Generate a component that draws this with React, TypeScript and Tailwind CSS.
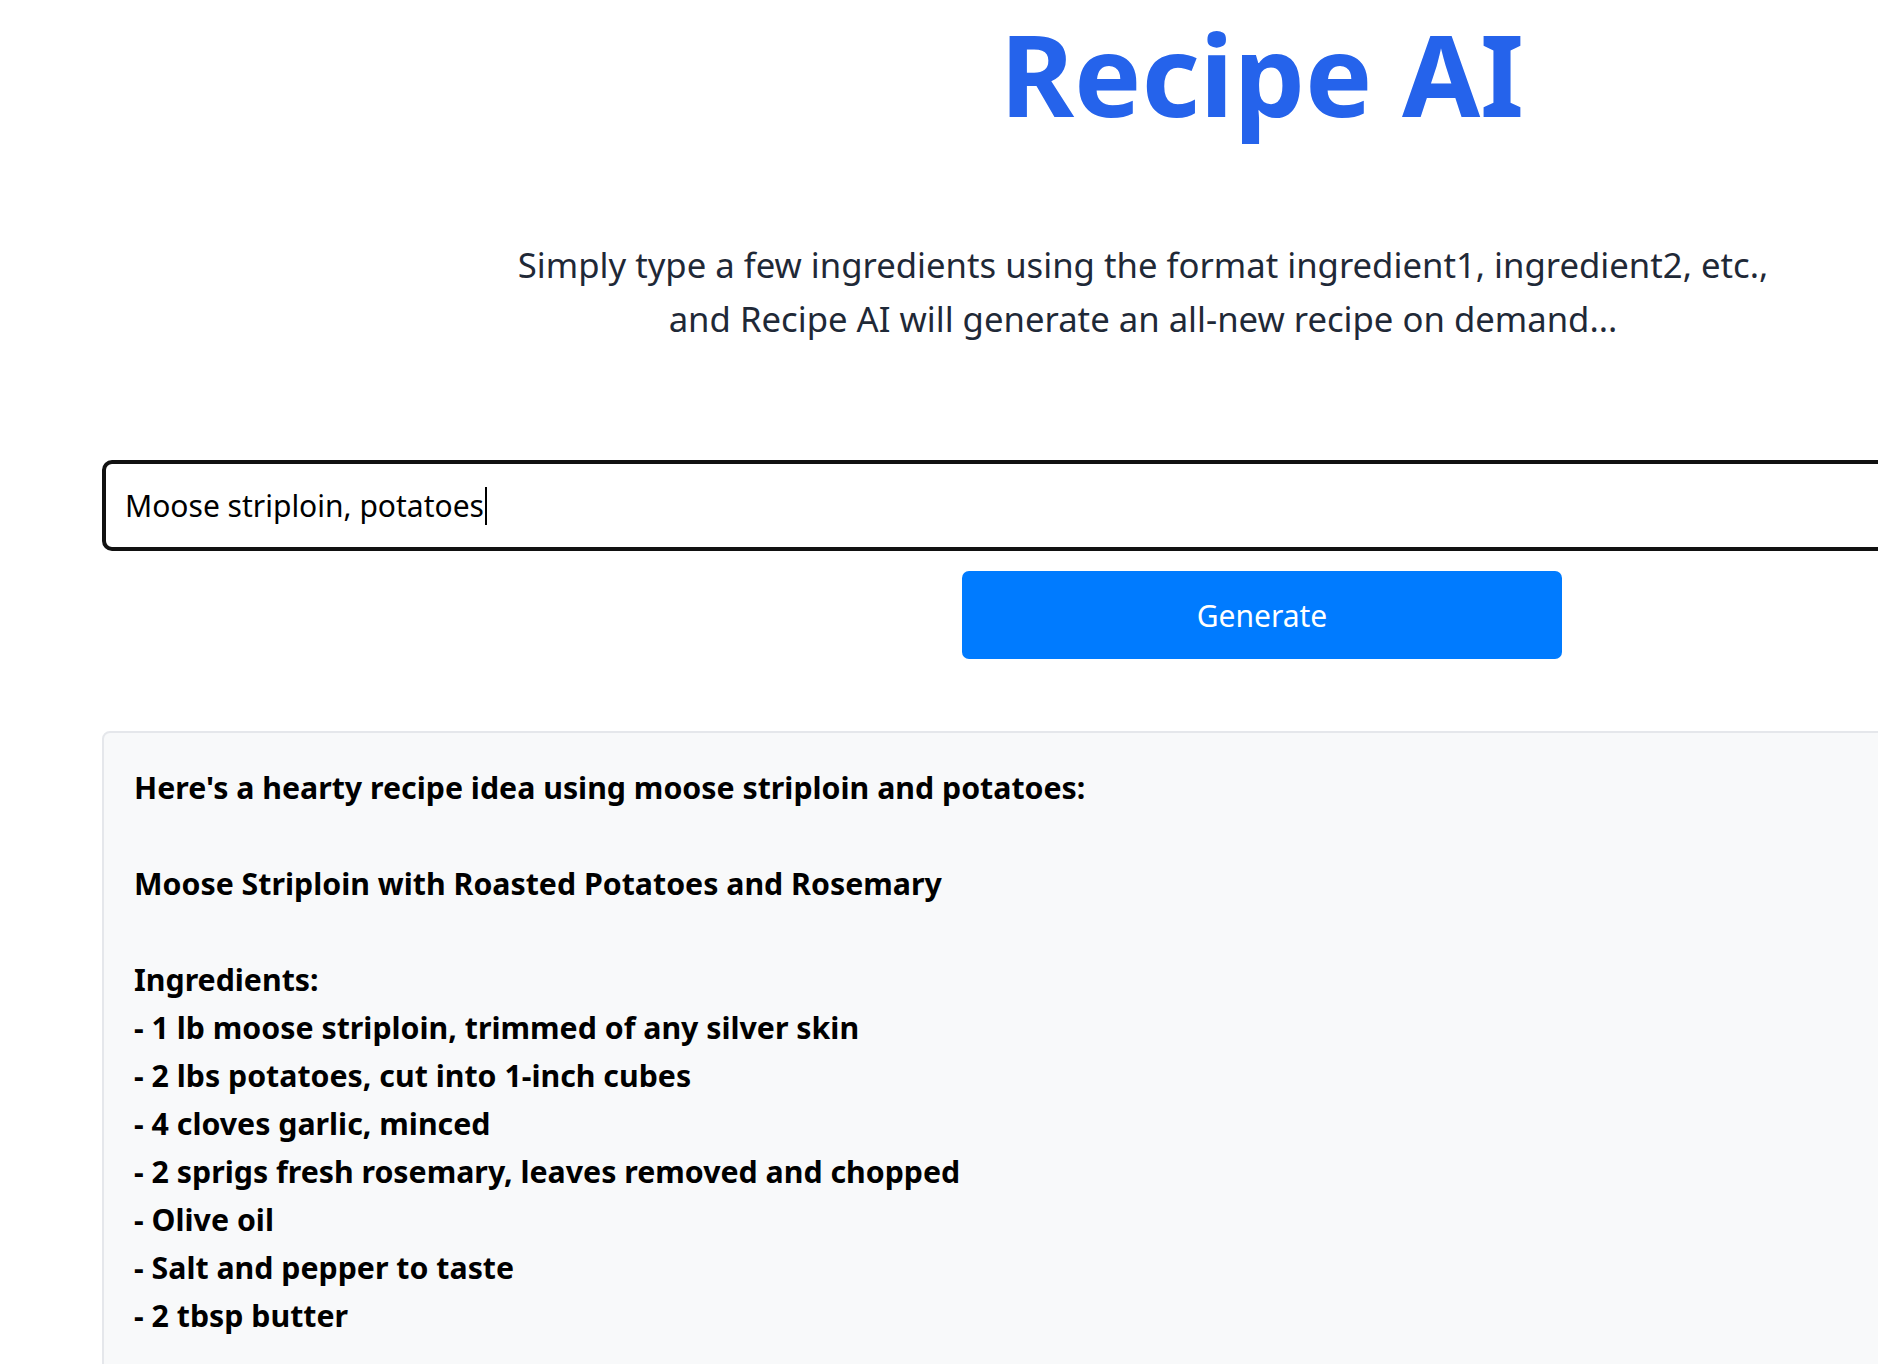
import React from "react";

const recipe = `Here's a hearty recipe idea using moose striploin and potatoes:

Moose Striploin with Roasted Potatoes and Rosemary

Ingredients:
- 1 lb moose striploin, trimmed of any silver skin
- 2 lbs potatoes, cut into 1-inch cubes
- 4 cloves garlic, minced
- 2 sprigs fresh rosemary, leaves removed and chopped
- Olive oil
- Salt and pepper to taste
- 2 tbsp butter
`;

export default function App() {
  return (
    <div className="w-[1878px] h-[1364px] overflow-hidden bg-white font-['Noto_Sans',sans-serif]">
      <div className="w-[2320px] ml-[102px]">
        <h1 className="mx-auto w-fit text-center text-[113px] font-bold leading-[147px] text-[#2563eb]">
          Recipe AI
        </h1>
        <p className="mt-[91px] w-[1400px] ml-[341px] text-center text-[34.7px] leading-[54px] text-[#1f2937]">
          Simply type a few ingredients using the format ingredient1, ingredient2, etc.,
          <br />
          and Recipe AI will generate an all-new recipe on demand...
        </p>
        <div className="mt-[114px] h-[91px] w-full rounded-[10px] border-[4px] border-[#111111] flex items-center pl-[19px]">
          <span className="text-[30px] text-black leading-normal">Moose striploin, potatoes</span>
          <span className="ml-[1px] h-[38px] w-[2px] bg-black" />
        </div>
        <div className="mt-[20px] flex justify-center">
          <button className="h-[88px] w-[600px] rounded-[7px] bg-[#007bff] text-[30px] text-white">
            Generate
          </button>
        </div>
        <div className="mt-[72px] w-full rounded-[8px] border-2 border-[#e5e7eb] bg-[#f8f9fa] pl-[30px] pt-[31px] pb-[40px]">
          <div className="whitespace-pre-line text-[30.3px] font-bold leading-[48px] text-black">
            {recipe}
          </div>
        </div>
      </div>
    </div>
  );
}
